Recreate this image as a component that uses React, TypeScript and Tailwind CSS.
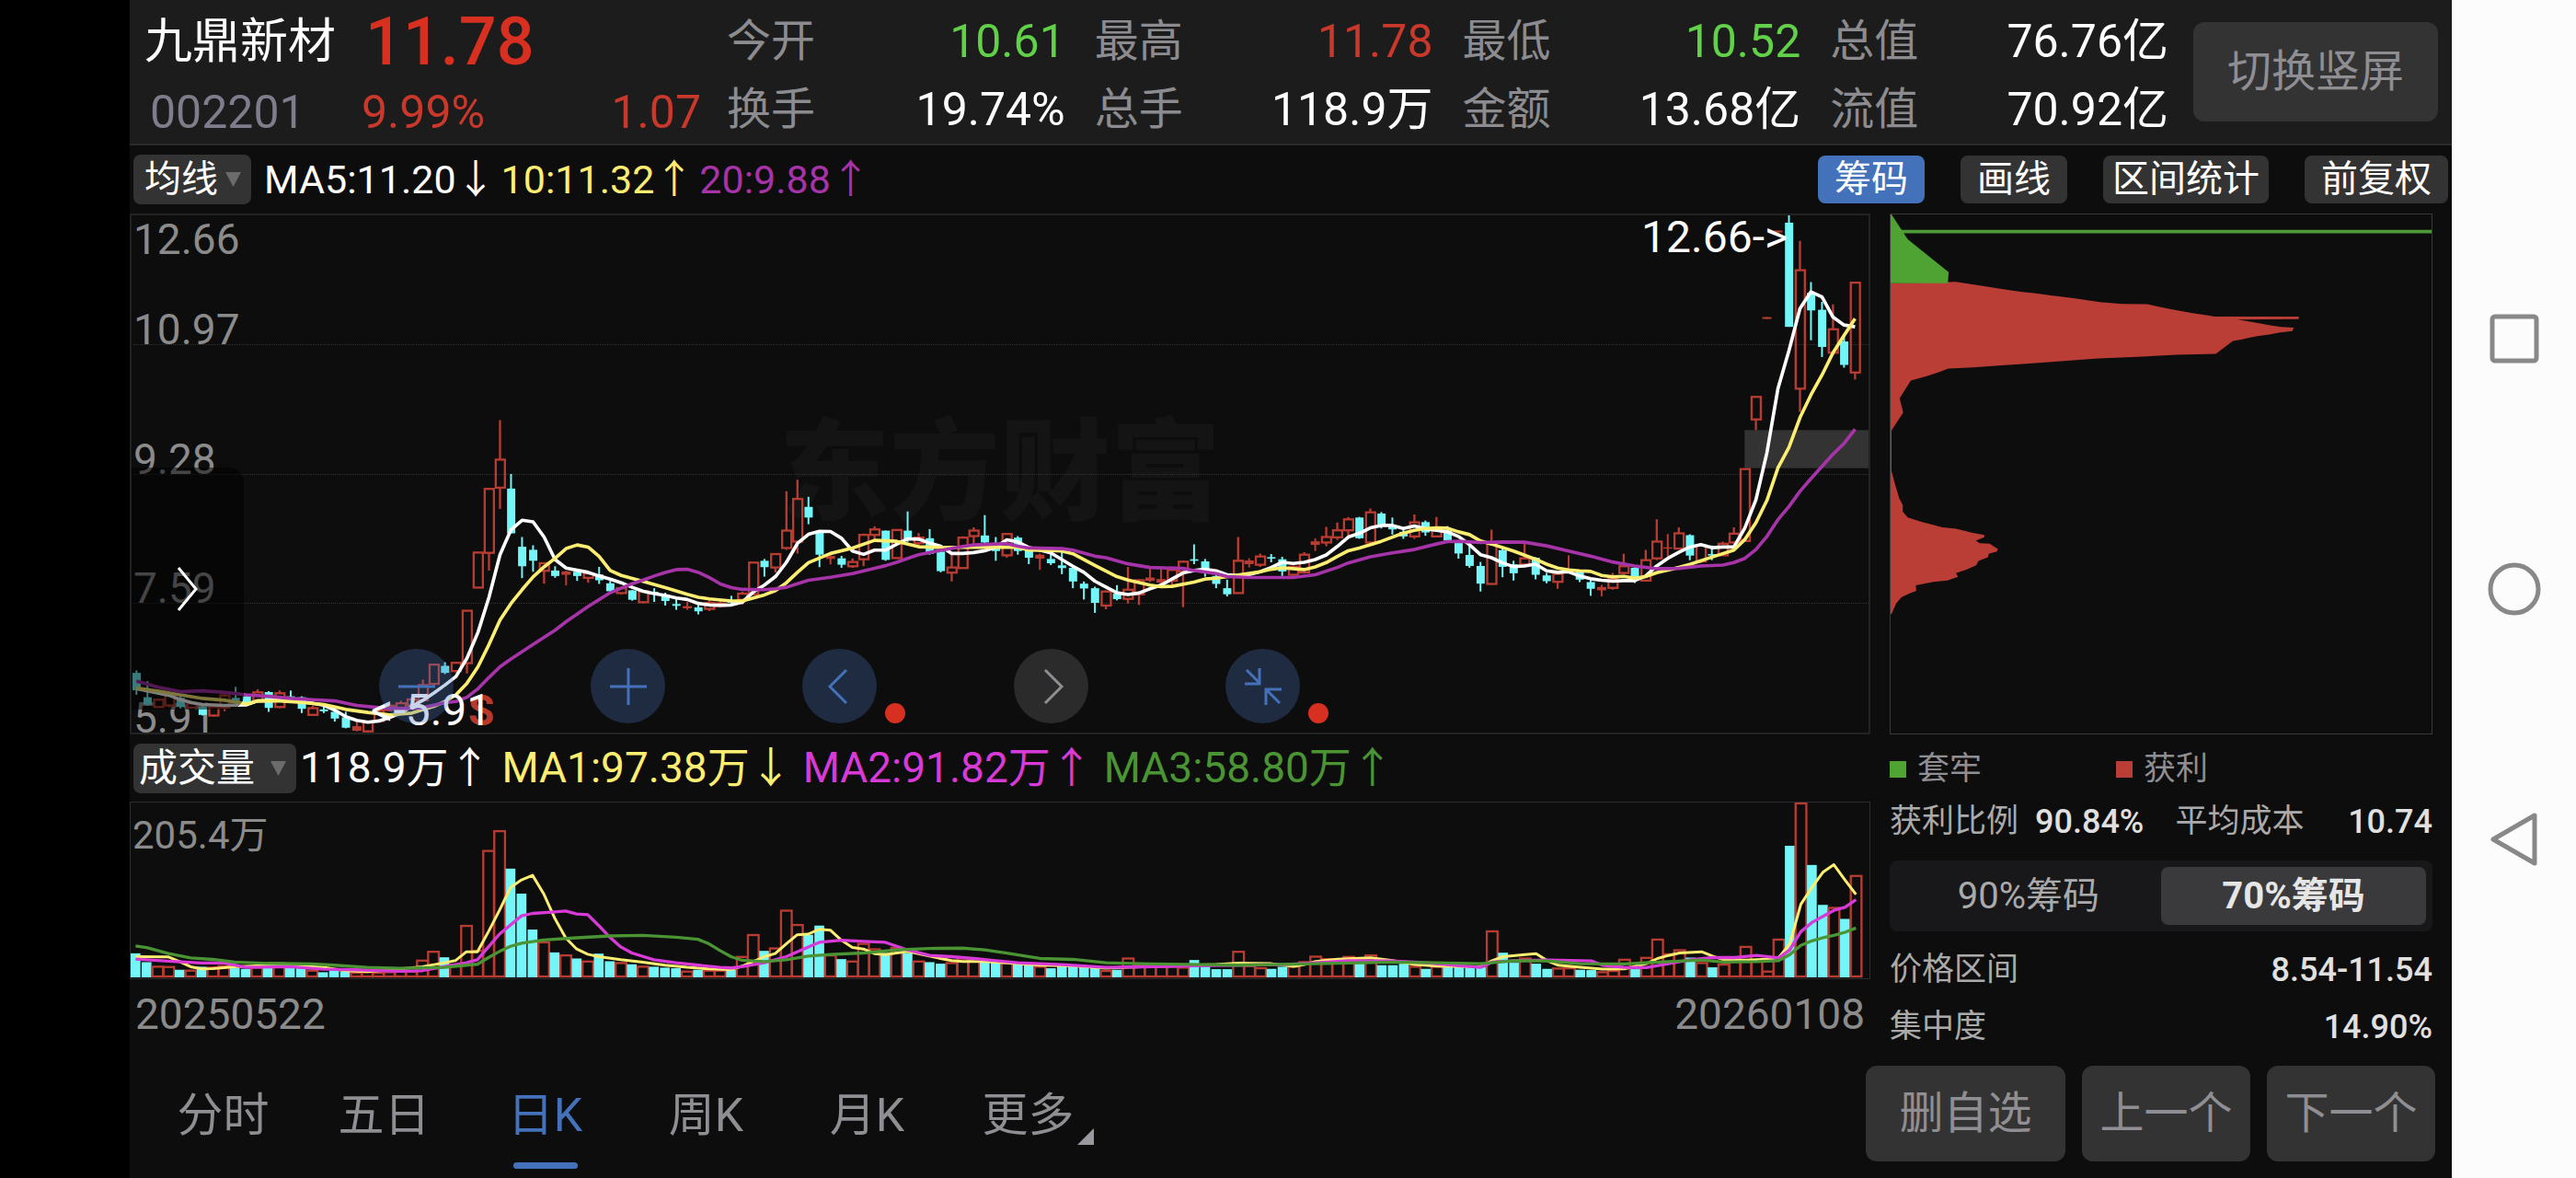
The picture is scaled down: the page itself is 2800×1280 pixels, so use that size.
import React from 'react';
import clsx from 'clsx';

type Kind = 'u' | 'd' | 'f';
// kind, high, body top, body bottom, low, volume
type Candle = [Kind, number, number, number, number, number];
type Point = [number, number];

// u = hollow rise, d = filled fall, f = filled rise
const CANDLES: Candle[] = [
  ['d', 870, 878, 935, 950, 79], ['d', 905, 958, 982, 985, 50], ['u', 962, 966, 990, 993, 38], ['u', 946, 950, 985, 992, 37],
  ['d', 950, 960, 990, 995, 25], ['u', 974, 978, 992, 995, 25], ['d', 984, 990, 1016, 1018, 35], ['u', 986, 990, 1018, 1022, 35],
  ['u', 946, 952, 992, 1004, 40], ['d', 924, 960, 972, 978, 30], ['d', 948, 955, 980, 984, 28], ['u', 932, 942, 970, 976, 35],
  ['d', 938, 941, 993, 1006, 33], ['u', 936, 945, 990, 994, 50], ['d', 936, 955, 961, 968, 33], ['d', 955, 958, 996, 1010, 32],
  ['u', 985, 994, 1016, 1018, 25], ['d', 985, 998, 1004, 1010, 17], ['d', 1000, 1006, 1028, 1038, 22], ['d', 1006, 1024, 1058, 1060, 20],
  ['f', 1036, 1053, 1068, 1070, 18], ['u', 1034, 1038, 1070, 1075, 20], ['u', 998, 1002, 1036, 1040, 18], ['u', 982, 986, 1000, 1004, 20],
  ['u', 970, 978, 992, 996, 22], ['u', 962, 965, 984, 988, 22], ['u', 900, 918, 968, 972, 58], ['u', 849, 851, 914, 925, 87],
  ['d', 843, 855, 878, 882, 66], ['u', 843, 845, 872, 876, 45], ['u', 672, 674, 846, 880, 172], ['u', 483, 483, 598, 600, 90],
  ['u', 274, 274, 484, 542, 418], ['u', 48, 178, 270, 340, 483], ['d', 225, 273, 420, 420, 357], ['d', 432, 464, 528, 567, 275],
  ['d', 459, 474, 510, 546, 157], ['u', 516, 518, 543, 585, 118], ['d', 528, 542, 560, 566, 82], ['f', 543, 545, 556, 591, 75],
  ['d', 542, 546, 560, 576, 62], ['u', 548, 552, 566, 582, 55], ['d', 530, 555, 574, 586, 78], ['d', 576, 584, 610, 612, 53],
  ['u', 596, 600, 616, 620, 50], ['d', 606, 607, 638, 641, 43], ['u', 608, 610, 646, 650, 38], ['d', 600, 612, 618, 645, 35],
  ['d', 615, 625, 642, 657, 32], ['d', 636, 652, 658, 671, 30], ['f', 645, 659, 666, 671, 22], ['d', 655, 663, 676, 686, 25],
  ['u', 640, 648, 668, 675, 25], ['u', 640, 650, 658, 664, 25], ['d', 625, 640, 648, 655, 25], ['u', 612, 618, 638, 654, 70],
  ['u', 514, 516, 620, 622, 142], ['d', 504, 510, 531, 562, 87], ['u', 486, 488, 532, 548, 98], ['u', 282, 411, 468, 474, 222],
  ['u', 244, 307, 447, 486, 175], ['d', 300, 333, 368, 390, 140], ['d', 416, 418, 490, 531, 170], ['f', 488, 494, 504, 522, 75],
  ['d', 494, 502, 523, 533, 60], ['u', 502, 514, 528, 533, 55], ['u', 421, 425, 505, 528, 113], ['u', 397, 407, 425, 446, 95],
  ['d', 411, 411, 507, 510, 80], ['u', 406, 409, 501, 504, 100], ['d', 348, 411, 440, 448, 80], ['u', 419, 434, 452, 462, 55],
  ['d', 406, 436, 487, 490, 50], ['d', 476, 480, 544, 548, 45], ['u', 483, 532, 549, 578, 50], ['u', 430, 434, 534, 536, 65],
  ['u', 400, 411, 429, 454, 55], ['d', 360, 427, 450, 458, 52], ['d', 432, 462, 478, 510, 52], ['u', 418, 422, 492, 500, 50],
  ['d', 429, 434, 478, 490, 48], ['d', 470, 475, 500, 521, 42], ['f', 486, 490, 503, 540, 38], ['d', 485, 504, 518, 524, 30],
  ['d', 478, 525, 534, 554, 38], ['d', 530, 533, 578, 600, 40], ['d', 578, 585, 601, 637, 33], ['d', 595, 600, 648, 681, 32],
  ['u', 608, 611, 657, 669, 24], ['d', 590, 618, 636, 640, 25], ['u', 530, 605, 635, 650, 65], ['u', 570, 574, 620, 655, 42],
  ['f', 530, 565, 576, 580, 42], ['f', 535, 570, 582, 585, 38], ['u', 536, 540, 575, 590, 38], ['u', 511, 513, 545, 662, 35],
  ['d', 456, 505, 510, 521, 57], ['d', 504, 512, 545, 562, 35], ['d', 555, 560, 586, 600, 27], ['d', 572, 600, 620, 627, 27],
  ['u', 432, 510, 616, 618, 87], ['f', 502, 509, 521, 532, 40], ['u', 486, 496, 523, 530, 33], ['d', 488, 498, 503, 515, 28],
  ['d', 497, 505, 545, 560, 35], ['u', 526, 530, 556, 560, 38], ['u', 482, 490, 548, 552, 53], ['f', 436, 446, 458, 478, 71],
  ['u', 399, 432, 450, 462, 63], ['u', 384, 410, 433, 442, 53], ['u', 366, 374, 410, 428, 70], ['d', 366, 368, 436, 438, 45],
  ['u', 338, 351, 450, 452, 75], ['d', 350, 355, 392, 404, 40], ['d', 368, 395, 407, 424, 40], ['d', 405, 415, 430, 438, 45],
  ['u', 358, 384, 430, 438, 38], ['d', 378, 383, 417, 428, 28], ['u', 366, 405, 430, 432, 38], ['d', 396, 410, 443, 445, 33],
  ['d', 446, 450, 486, 503, 33], ['d', 450, 491, 527, 533, 33], ['d', 514, 527, 585, 611, 33], ['u', 408, 450, 586, 588, 154],
  ['d', 465, 475, 530, 564, 81], ['d', 510, 522, 551, 575, 48], ['u', 455, 502, 522, 526, 65], ['d', 498, 500, 556, 571, 45],
  ['d', 550, 558, 577, 584, 28], ['u', 550, 553, 579, 602, 32], ['f', 492, 540, 545, 550, 33], ['d', 542, 545, 572, 580, 25],
  ['d', 570, 580, 602, 625, 24], ['f', 589, 596, 607, 627, 20], ['u', 550, 570, 599, 605, 24], ['u', 487, 528, 550, 554, 61],
  ['d', 530, 533, 572, 583, 27], ['u', 474, 508, 575, 578, 67], ['u', 374, 447, 502, 508, 127], ['f', 422, 466, 470, 495, 79],
  ['u', 400, 420, 470, 473, 92], ['d', 423, 426, 493, 508, 65], ['u', 456, 460, 512, 518, 50], ['d', 460, 488, 493, 508, 33],
  ['u', 447, 454, 492, 494, 45], ['u', 400, 421, 450, 455, 55], ['u', 207, 209, 445, 448, 103], ['u', -28, -28, 46, 81, 60],
  ['f', -290, -290, -284, -284, 22], ['f', -574, -574, -568, -568, 127], ['d', -624, -600, -258, -258, 432], ['u', -540, -444, -55, 21, 574],
  ['d', -405, -370, -312, -214, 369], ['d', -340, -314, -192, -159, 238], ['u', -332, -250, -173, -165, 231], ['d', -230, -210, -133, -124, 192],
  ['u', -403, -403, -108, -85, 336],
];

const MA5: Point[] = [
  [0, 930], [2, 945], [3, 952], [4, 966], [5, 976], [6, 982], [8, 985], [10, 983], [11, 970], [13, 968], [15, 972], [17, 984],
  [18, 1000], [19, 1022], [20, 1034], [21, 1040], [22, 1036], [23, 1024], [24, 1010], [25, 988], [26, 968], [27, 944], [28, 918],
  [29, 890], [30, 830], [31, 745], [32, 630], [33, 490], [34, 408], [35, 377], [36, 382], [37, 432], [38, 506], [39, 534], [40, 541],
  [41, 548], [42, 560], [43, 570], [44, 582], [45, 597], [46, 610], [47, 618], [48, 624], [49, 632], [50, 637], [51, 650], [52, 655],
  [53, 656], [54, 655], [55, 646], [56, 612], [57, 590], [58, 562], [59, 515], [60, 453], [61, 423], [62, 413], [63, 414], [64, 436],
  [65, 478], [66, 489], [67, 475], [68, 475], [69, 456], [70, 438], [71, 439], [72, 452], [73, 462], [74, 486], [75, 486], [76, 483],
  [77, 477], [78, 465], [79, 441], [80, 448], [81, 466], [82, 475], [83, 484], [84, 506], [85, 528], [86, 548], [87, 577], [88, 596],
  [89, 615], [90, 621], [91, 616], [92, 602], [93, 590], [94, 570], [95, 550], [96, 542], [97, 538], [98, 543], [99, 556], [100, 558],
  [101, 555], [102, 546], [103, 532], [104, 515], [105, 519], [106, 515], [107, 506], [108, 491], [109, 463], [110, 432], [111, 420],
  [112, 402], [113, 394], [114, 394], [115, 404], [116, 396], [117, 405], [118, 410], [119, 415], [120, 430], [121, 457], [122, 490],
  [123, 500], [124, 517], [125, 529], [126, 527], [127, 521], [128, 543], [129, 548], [130, 546], [131, 560], [132, 569], [133, 574],
  [134, 577], [135, 575], [136, 575], [137, 560], [138, 527], [139, 502], [140, 482], [141, 465], [142, 457], [143, 467], [144, 465],
  [145, 465], [146, 402], [147, 310], [148, 155], [149, -55], [150, -180], [151, -318], [152, -373], [153, -356], [154, -290],
  [155, -264], [156, -258],
];

const MA10: Point[] = [
  [0, 928], [2, 938], [4, 950], [6, 962], [8, 968], [10, 980], [11, 970], [13, 970], [15, 975], [17, 982], [19, 998], [21, 1008],
  [23, 1016], [25, 1010], [27, 988], [28, 972], [29, 950], [30, 912], [31, 858], [32, 785], [33, 705], [34, 650], [35, 605],
  [36, 563], [37, 530], [38, 502], [39, 470], [40, 458], [41, 465], [42, 496], [43, 542], [44, 558], [46, 578], [48, 598], [50, 620],
  [51, 630], [52, 635], [54, 642], [55, 642], [56, 632], [57, 622], [58, 608], [59, 582], [60, 548], [61, 516], [63, 486], [65, 468],
  [67, 443], [69, 446], [71, 464], [73, 466], [76, 466], [78, 465], [80, 466], [81, 475], [83, 476], [84, 478], [85, 487], [87, 525],
  [89, 562], [90, 573], [92, 590], [93, 595], [94, 594], [96, 580], [97, 570], [98, 567], [100, 557], [102, 546], [103, 538],
  [104, 533], [106, 539], [107, 530], [108, 516], [109, 496], [110, 477], [111, 468], [113, 446], [115, 419], [116, 410], [117, 404],
  [118, 402], [119, 403], [120, 415], [121, 424], [122, 445], [123, 455], [125, 478], [127, 505], [128, 521], [129, 534], [130, 540],
  [131, 543], [132, 545], [133, 558], [134, 563], [135, 561], [136, 567], [137, 562], [138, 549], [140, 532], [141, 522], [143, 498],
  [145, 475], [146, 440], [147, 385], [148, 312], [149, 205], [150, 138], [151, 40], [152, -35], [153, -100], [154, -173],
  [155, -230], [156, -285],
];

const MA20: Point[] = [
  [0, 905], [2, 925], [4, 940], [6, 937], [8, 942], [10, 950], [12, 955], [14, 962], [16, 966], [18, 970], [20, 985], [22, 992],
  [24, 996], [26, 992], [28, 976], [29, 972], [30, 958], [31, 930], [32, 893], [33, 858], [34, 832], [36, 785], [38, 738], [39, 710],
  [41, 660], [43, 615], [45, 585], [46, 573], [47, 560], [48, 548], [49, 539], [50, 538], [51, 548], [52, 565], [53, 586], [54, 598],
  [55, 604], [57, 605], [58, 602], [59, 597], [60, 585], [61, 574], [63, 564], [65, 552], [67, 535], [68, 526], [69, 515], [70, 502],
  [71, 490], [73, 476], [75, 463], [76, 458], [78, 455], [79, 454], [80, 462], [81, 468], [84, 470], [85, 475], [87, 495], [88, 500],
  [90, 520], [92, 532], [95, 535], [96, 542], [98, 552], [99, 562], [101, 565], [105, 565], [107, 556], [109, 532], [110, 517],
  [112, 497], [114, 484], [116, 473], [118, 455], [119, 447], [120, 446], [122, 450], [124, 448], [126, 449], [128, 461], [130, 478],
  [132, 495], [134, 514], [136, 527], [138, 536], [140, 535], [142, 527], [144, 524], [145, 516], [146, 502], [147, 473], [148, 430],
  [149, 375], [150, 332], [151, 282], [152, 240], [153, 200], [154, 160], [155, 125], [156, 78],
];

const VOL_MA1: Point[] = [
  [0, 722], [3, 723], [4, 738], [5, 755], [6, 762], [7, 761], [9, 755], [11, 752], [14, 752], [17, 757], [19, 768], [21, 771],
  [23, 766], [26, 755], [28, 742], [29, 735], [30, 706], [31, 706], [32, 640], [33, 570], [34, 495], [35, 470], [36, 455], [37, 515],
  [38, 595], [39, 660], [40, 697], [41, 714], [42, 722], [44, 732], [46, 740], [48, 750], [50, 757], [52, 762], [54, 764], [55, 753],
  [56, 738], [57, 722], [58, 712], [59, 680], [60, 650], [61, 648], [62, 632], [63, 635], [64, 668], [65, 692], [66, 697], [67, 712],
  [68, 715], [69, 710], [70, 705], [71, 712], [73, 728], [74, 735], [75, 738], [77, 738], [78, 740], [80, 745], [82, 750], [85, 752],
  [88, 760], [90, 757], [94, 752], [98, 748], [100, 743], [103, 745], [105, 754], [106, 748], [107, 738], [109, 730], [112, 726],
  [114, 735], [116, 748], [118, 753], [122, 755], [123, 735], [124, 722], [126, 715], [127, 712], [128, 735], [129, 750], [131, 757],
  [133, 763], [135, 762], [137, 745], [138, 728], [139, 718], [140, 710], [142, 706], [143, 720], [144, 732], [146, 733], [148, 730],
  [149, 725], [150, 680], [151, 550], [152, 495], [153, 445], [154, 420], [155, 470], [156, 518],
];

const VOL_MA2: Point[] = [
  [0, 730], [3, 737], [6, 743], [8, 742], [10, 757], [14, 755], [17, 763], [20, 765], [24, 770], [26, 768], [28, 755], [30, 742],
  [31, 732], [32, 690], [33, 648], [34, 618], [35, 588], [36, 580], [38, 575], [39, 572], [40, 582], [41, 584], [42, 620], [43, 658],
  [44, 690], [45, 710], [47, 732], [49, 742], [51, 750], [53, 757], [54, 759], [55, 755], [57, 742], [59, 722], [61, 690], [62, 675],
  [64, 668], [66, 672], [68, 675], [70, 700], [72, 718], [74, 722], [76, 728], [78, 735], [80, 742], [84, 748], [88, 757], [90, 756],
  [94, 754], [96, 752], [100, 750], [104, 748], [107, 742], [110, 735], [114, 736], [117, 742], [120, 752], [122, 757], [123, 740],
  [125, 735], [128, 733], [132, 736], [133, 750], [135, 757], [137, 758], [139, 745], [141, 732], [143, 725], [145, 725], [147, 718],
  [149, 726], [150, 700], [151, 640], [152, 610], [153, 590], [154, 570], [155, 560], [156, 535],
];

const VOL_MA3: Point[] = [
  [0, 687], [1, 692], [3, 712], [5, 726], [7, 731], [9, 740], [12, 744], [16, 746], [18, 750], [21, 757], [24, 760], [28, 757],
  [30, 750], [31, 747], [32, 725], [33, 705], [34, 688], [35, 678], [37, 667], [40, 660], [43, 654], [46, 652], [49, 658], [51, 665],
  [52, 680], [53, 702], [54, 722], [55, 734], [57, 738], [59, 732], [61, 720], [63, 715], [66, 710], [69, 700], [72, 695], [75, 694],
  [77, 700], [79, 710], [82, 728], [85, 731], [88, 742], [92, 746], [97, 748], [100, 750], [103, 748], [107, 745], [110, 743],
  [114, 740], [118, 742], [122, 745], [125, 735], [128, 736], [131, 745], [135, 746], [139, 738], [142, 733], [144, 740], [147, 738],
  [149, 735], [150, 715], [151, 685], [152, 670], [153, 660], [154, 652], [155, 642], [156, 628],
];

const CHIPS_PROFIT =
  '50,236 195,232 225,238 255,244 284,250 313,256 343,262 372,266 402,271 431,276 460,281 490,287 519,292 563,297 620,298 645,305 670,312 695,318 720,324 745,329 770,334 956,334 956,342 820,343 842,348 868,354 893,360 917,365 945,367 942,377 915,381 890,387 864,392 846,397 828,402 810,406 772,444 684,447 598,453 510,458 455,463 400,469 343,474 289,479 233,484 178,488 155,499 130,510 95,523 70,575 78,617 52,670 52,790 60,830 69,870 77,890 77,910 88,927 120,940 148,950 165,956 195,960 214,966 232,972 258,978 258,985 239,995 248,1003 270,1004 288,1020 286,1027 268,1034 266,1044 245,1055 240,1068 218,1081 195,1091 200,1102 176,1113 145,1117 122,1123 106,1127 107,1143 90,1152 74,1162 62,1181 52,1212 50,1212';

const STATS = [
  { label: '今开', value: '10.61', tone: 'text-[#62d14a]' },
  { label: '最高', value: '11.78', tone: 'text-[#c9382b]' },
  { label: '最低', value: '10.52', tone: 'text-[#62d14a]' },
  { label: '总值', value: '76.76亿', tone: 'text-white' },
  { label: '换手', value: '19.74%', tone: 'text-white' },
  { label: '总手', value: '118.9万', tone: 'text-white' },
  { label: '金额', value: '13.68亿', tone: 'text-white' },
  { label: '流值', value: '70.92亿', tone: 'text-white' },
];

const PERIODS = ['分时', '五日', '日K', '周K', '月K', '更多'];

const RED = '#b83c31';
const CYAN = '#74f5f7';

const cx = (i: number) => 49 + i * 36;
const toPoints = (line: Point[]) => line.map(([i, y]) => `${cx(i)},${y}`).join(' ');

function Line({ data, color, width }: { data: Point[]; color: string; width: number }) {
  return <polyline points={toPoints(data)} fill="none" stroke={color} strokeWidth={width} strokeLinejoin="round" />;
}

function CandleShape({ candle, i }: { candle: Candle; i: number }) {
  const [kind, high, top, bottom, low] = candle;
  const x = cx(i);
  if (kind === 'd') {
    return (
      <g fill={CYAN}>
        <rect x={x - 3} y={high} width={6} height={low - high} />
        <rect x={x - 13} y={top} width={27} height={bottom - top} />
      </g>
    );
  }
  if (kind === 'f') {
    return (
      <g fill={RED}>
        <rect x={x - 3} y={high} width={6} height={low - high} />
        <rect x={x - 15} y={top} width={30} height={bottom - top} />
      </g>
    );
  }
  return (
    <g fill="none" stroke={RED} strokeWidth={7}>
      <path d={`M${x} ${high}V${top}M${x} ${bottom}V${low}`} />
      <rect x={x - 14} y={top} width={30} height={bottom - top} />
    </g>
  );
}

function PriceChart() {
  return (
    <svg className="absolute inset-0 h-full w-full" viewBox="33 -624 5676 1698" preserveAspectRatio="none">
      <rect x={5304} y={81} width={405} height={125} fill="#333333" />
      {CANDLES.map((c, i) => (
        <CandleShape key={i} candle={c} i={i} />
      ))}
      <Line data={MA5} color="#ffffff" width={11} />
      <Line data={MA10} color="#fdee72" width={11} />
      <Line data={MA20} color="#a633a8" width={11} />
    </svg>
  );
}

function VolumeChart() {
  return (
    <svg className="absolute inset-0 h-full w-full" viewBox="33 216 5676 577" preserveAspectRatio="none">
      {CANDLES.map(([kind, , , , , vol], i) =>
        kind === 'd' ? (
          <rect key={i} x={cx(i) - 16} y={790 - vol} width={32} height={vol} fill={CYAN} />
        ) : (
          <rect key={i} x={cx(i) - 17} y={793 - vol} width={35} height={vol - 6} fill="none" stroke={RED} strokeWidth={7} />
        )
      )}
      <Line data={VOL_MA1} color="#fdee72" width={9} />
      <Line data={VOL_MA2} color="#d83ad8" width={10} />
      <Line data={VOL_MA3} color="#4a9434" width={10} />
    </svg>
  );
}

function Dropdown({ label, options, className }: { label: string; options: string[]; className?: string }) {
  return (
    <div className={clsx('relative flex h-[54px] items-center rounded-lg bg-[#333333]', className)}>
      <select aria-label={label} className="h-full w-full appearance-none bg-transparent leading-[54px] text-white outline-none">
        {options.map((o) => (
          <option key={o}>{o}</option>
        ))}
      </select>
      <svg className="pointer-events-none absolute right-[11px] h-4 w-[17px]" viewBox="0 0 17 16">
        <path d="M0 0h17L8.5 16z" fill="#6b6b6b" />
      </svg>
    </div>
  );
}

function ChartButton({ label, muted, dot, children }: { label: string; muted?: boolean; dot?: boolean; children: React.ReactNode }) {
  return (
    <button
      aria-label={label}
      className={clsx(
        'relative flex h-[81px] w-[81px] items-center justify-center rounded-full',
        muted ? 'bg-[#2b2b2b] text-[#8e8e93]' : 'bg-[#4472ba]/30 text-[#4472ba]'
      )}
    >
      <svg className="h-[40px] w-[40px]" viewBox="0 0 40 40" fill="none" stroke="currentColor" strokeWidth={3}>
        {children}
      </svg>
      {dot && <span className="absolute top-[59px] left-[90px] h-[22px] w-[22px] rounded-full bg-[#d83020]" />}
    </button>
  );
}

function Header() {
  return (
    <header className="flex h-[158px] items-center border-b-2 border-[#2c2c2c] bg-[#1c1c1c] pr-[15px] pl-4">
      <div className="flex h-full w-[605px] flex-col pt-1.5">
        <div className="flex h-[80px] items-center">
          <h1 className="w-[240px] text-[52px] text-white">九鼎新材</h1>
          <span className="text-[72px] font-medium text-[#d83020]">11.78</span>
        </div>
        <div className="flex h-[72px] items-center text-[50px] text-[#c9382b]">
          <span className="w-[236px] pl-1.5 text-[#7f7d8c]">002201</span>
          <span>9.99%</span>
          <span className="ml-auto">1.07</span>
        </div>
      </div>
      <dl className="ml-7 grid h-full flex-1 grid-cols-4 grid-rows-2 gap-x-8 pt-2">
        {STATS.map((s) => (
          <div key={s.label} className="flex items-center justify-between">
            <dt className="text-5xl text-[#8c8c90]">{s.label}</dt>
            <dd className={clsx('text-[50px]', s.tone)}>{s.value}</dd>
          </div>
        ))}
      </dl>
      <button className="ml-[27px] h-[108px] w-[266px] rounded-xl bg-[#333333] text-5xl text-[#8e8e93]">切换竖屏</button>
    </header>
  );
}

function Toolbar() {
  return (
    <div className="flex h-[74px] items-center pr-1 pl-1">
      <Dropdown label="主图指标" options={['均线']} className="w-[128px] pl-3 text-[40px]" />
      <div className="ml-3.5 flex gap-1.5 text-[43px] whitespace-nowrap">
        <span className="text-white">MA5:11.20↓</span>
        <span className="text-[#fdee72]">10:11.32↑</span>
        <span className="text-[#a633a8]">20:9.88↑</span>
      </div>
      <div className="ml-auto flex gap-[39px] text-[40px] leading-[52px] text-white">
        <button className="rounded-lg bg-[#4472ba] px-[18px]">筹码</button>
        <button className="rounded-lg bg-[#333333] px-[18px]">画线</button>
        <button className="rounded-lg bg-[#333333] px-2.5">区间统计</button>
        <button className="rounded-lg bg-[#333333] px-[18px]">前复权</button>
      </div>
    </div>
  );
}

function PricePanel() {
  return (
    <section className="relative min-h-[400px] flex-1 border-2 border-[#222222]">
      <div className="absolute inset-0 flex items-center justify-center text-[120px] leading-none font-black text-[#141414]">东方财富</div>
      <div className="absolute inset-0 flex flex-col pl-0.5 text-[46px] leading-8 text-[#8b8b8b]">
        <div className="flex flex-1 flex-col justify-between border-b border-dotted border-[#333333]">
          <span className="mt-2.5">12.66</span>
          <span>10.97</span>
        </div>
        <div className="flex flex-1 items-end border-b border-dotted border-[#333333]">9.28</div>
        <div className="flex flex-1 items-end border-b border-dotted border-[#333333]">7.59</div>
        <div className="flex flex-1 items-end">5.91</div>
      </div>
      <span className="absolute bottom-2 left-[366px] text-[46px] leading-8 font-bold text-[#b8382c]">S</span>
      <PriceChart />
      <span className="absolute top-2 right-[88px] text-5xl leading-8 text-white">12.66-&gt;</span>
      <span className="absolute bottom-2 left-[260px] text-5xl leading-8 text-white">&lt;-5.91</span>
      <button aria-label="展开" className="absolute bottom-[25px] left-0 flex h-[263px] w-[122px] items-center justify-center rounded-r-2xl bg-black/50">
        <svg className="h-[50px] w-6" viewBox="0 0 24 50" fill="none" stroke="#ffffff" strokeWidth={3}>
          <path d="M2 2l19 23L2 48" />
        </svg>
      </button>
      <div className="absolute bottom-2.5 left-[269px] flex gap-[149px]">
        <ChartButton label="缩小">
          <path d="M0 20h40" />
        </ChartButton>
        <ChartButton label="放大">
          <path d="M0 20h40M20 0v40" />
        </ChartButton>
        <ChartButton label="左移" dot>
          <path d="M27 2L9 20l18 18" />
        </ChartButton>
        <ChartButton label="右移" muted>
          <path d="M13 2l18 18-18 18" />
        </ChartButton>
        <ChartButton label="收起" dot>
          <path d="M2 2l14 14M16 0v17H0M38 38L24 24M40 23H23v17" />
        </ChartButton>
      </div>
    </section>
  );
}

function VolumePanel() {
  return (
    <>
      <div className="flex h-[73px] items-center pl-1">
        <Dropdown label="副图指标" options={['成交量']} className="w-[177px] pl-1.5 text-[42px]" />
        <div className="ml-1 flex gap-3 text-[46px] whitespace-nowrap">
          <span className="text-white">118.9万↑</span>
          <span className="text-[#fdee72]">MA1:97.38万↓</span>
          <span className="text-[#d83ad8]">MA2:91.82万↑</span>
          <span className="text-[#4a9434]">MA3:58.80万↑</span>
        </div>
      </div>
      <section className="relative h-[193px] border border-[#2c2c2c]">
        <VolumeChart />
        <span className="relative block pt-5 pl-0.5 text-[42px] leading-8 text-[#8b8b8b]">205.4万</span>
      </section>
      <div className="flex h-[76px] items-center justify-between px-1.5 text-[46px] text-[#8b8b8b]">
        <span>20250522</span>
        <span>20260108</span>
      </div>
    </>
  );
}

function ChipsPanel() {
  return (
    <aside className="flex w-[590px] flex-col text-[35px] leading-10 text-[#aaaaaa]">
      <div className="relative min-h-[400px] flex-1 border border-[#3a3838]">
        <svg className="absolute inset-0 h-full w-full" viewBox="50 33 1201 1531" preserveAspectRatio="none">
          <path d="M50 83.5H1251" stroke="#4e9a38" strokeWidth={10} />
          <polygon points={CHIPS_PROFIT} fill="#bb3e36" />
          <polygon points="50,33 52,33 77,84 88,106 179,203 177,236 50,236" fill="#4fa333" />
        </svg>
      </div>
      <div className="flex h-[75px] items-center text-[#8e8e93]">
        <div className="flex w-[246px] items-center gap-3">
          <i className="h-[18px] w-[18px] bg-[#4fa333]" />
          套牢
        </div>
        <div className="flex items-center gap-3">
          <i className="h-[18px] w-[18px] bg-[#bb3e36]" />
          获利
        </div>
      </div>
      <div className="flex h-10 items-center">
        <span>获利比例</span>
        <span className="ml-[18px] text-4xl font-medium text-[#e0e0e0]">90.84%</span>
        <span className="ml-[34px]">平均成本</span>
        <span className="ml-auto text-4xl font-medium text-[#e0e0e0]">10.74</span>
      </div>
      <div className="mt-[22px] flex h-[77px] rounded-lg bg-[#18181a] p-[7px] text-[40px]">
        <button className="flex-1 rounded-lg">90%筹码</button>
        <button className="flex-1 rounded-lg bg-[#3a3a3c] font-bold text-[#e6e6e6]">70%筹码</button>
      </div>
      <div className="mt-[22px] flex h-10 items-center justify-between">
        <span>价格区间</span>
        <span className="text-4xl font-medium text-[#e0e0e0]">8.54-11.54</span>
      </div>
      <div className="mt-[22px] mb-1 flex h-10 items-center justify-between">
        <span>集中度</span>
        <span className="text-4xl font-medium text-[#e0e0e0]">14.90%</span>
      </div>
    </aside>
  );
}

function Footer() {
  return (
    <footer className="flex h-[140px] items-center justify-between pr-[18px] pl-3.5 text-[#8e8e93]">
      <nav className="flex h-full text-[50px]">
        {PERIODS.map((p) => (
          <button key={p} className={clsx('relative w-[175px] pt-1', p === '日K' && 'text-[#4472ba]')}>
            {p}
            {p === '日K' && <span className="absolute bottom-2.5 left-[53px] h-[7px] w-[70px] rounded-full bg-[#4472ba]" />}
            {p === '更多' && (
              <svg className="absolute right-4 bottom-9 h-[18px] w-[18px]" viewBox="0 0 18 18">
                <path d="M18 0v18H0z" fill="#9a9a9e" />
              </svg>
            )}
          </button>
        ))}
      </nav>
      <div className="flex gap-[18px] text-5xl">
        <button className="h-[104px] w-[217px] rounded-xl bg-[#333333]">删自选</button>
        <button className="h-[104px] w-[183px] rounded-xl bg-[#333333]">上一个</button>
        <button className="h-[104px] w-[183px] rounded-xl bg-[#333333]">下一个</button>
      </div>
    </footer>
  );
}

function SystemNav() {
  return (
    <nav className="flex w-[135px] flex-col items-center justify-center gap-[212px] bg-[#fcfcfc]">
      <button aria-label="最近任务">
        <svg className="h-[60px] w-[60px]" viewBox="0 0 60 60" fill="none" stroke="#888888" strokeWidth={5}>
          <rect x={6} y={6} width={48} height={48} rx={3} />
        </svg>
      </button>
      <button aria-label="主屏幕">
        <svg className="h-[60px] w-[60px]" viewBox="0 0 60 60" fill="none" stroke="#888888" strokeWidth={5}>
          <circle cx={30} cy={30} r={26} />
        </svg>
      </button>
      <button aria-label="返回">
        <svg className="h-[60px] w-[60px]" viewBox="0 0 60 60" fill="none" stroke="#888888" strokeWidth={5} strokeLinejoin="round">
          <path d="M52 4v52L7 30z" />
        </svg>
      </button>
    </nav>
  );
}

export default function App() {
  return (
    <div className="flex min-h-screen bg-black font-[Roboto,'Noto_Sans_CJK_SC',sans-serif]">
      <div className="w-[141px]" />
      <div className="flex flex-1 flex-col bg-[#0d0d0d]">
        <Header />
        <Toolbar />
        <main className="flex flex-1 gap-[21px] pr-[21px]">
          <div className="flex flex-1 flex-col">
            <PricePanel />
            <VolumePanel />
          </div>
          <ChipsPanel />
        </main>
        <Footer />
      </div>
      <SystemNav />
    </div>
  );
}
